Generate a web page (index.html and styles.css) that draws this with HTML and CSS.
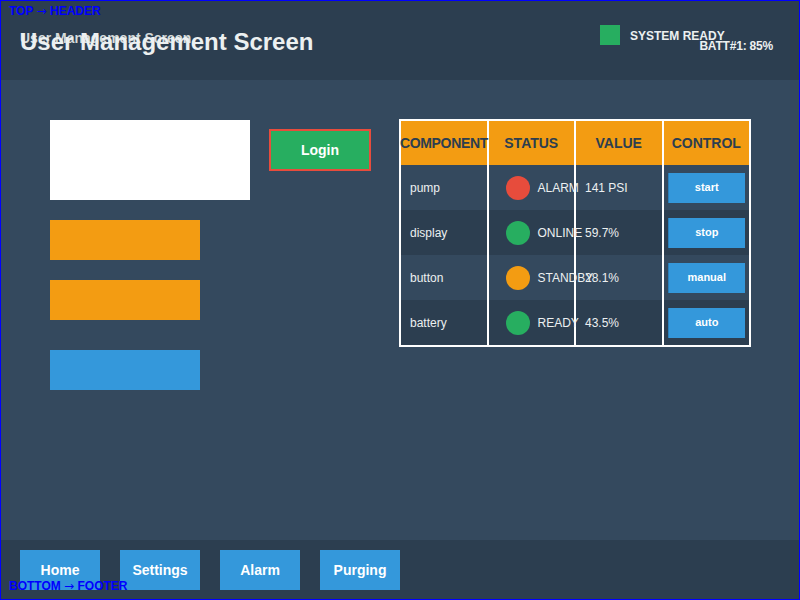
FILE: index.html
```html
<!DOCTYPE html>
<html lang="en">
<head>
<meta charset="utf-8">
<title>User Management Screen</title>
<link rel="stylesheet" href="styles.css">
</head>
<body>
<div class="screen">
  <header class="header">
    <div class="title-block">
      <span class="title-small">User Management Screen</span>
      <h1 class="title">User Management Screen</h1>
    </div>
    <div class="status">
      <div class="status-row">
        <span class="status-square"></span>
        <span class="status-text">SYSTEM READY</span>
      </div>
      <div class="batt">BATT#1: 85%</div>
    </div>
  </header>

  <main class="main">
    <section class="left">
      <div class="form-row">
        <input class="input-box" type="text" aria-label="username">
        <button class="login-btn">Login</button>
      </div>
      <div class="bar bar-orange"></div>
      <div class="bar bar-orange"></div>
      <div class="bar bar-blue"></div>
    </section>

    <table class="grid">
      <thead>
        <tr>
          <th class="th-wide">COMPONENT</th>
          <th>STATUS</th>
          <th>VALUE</th>
          <th>CONTROL</th>
        </tr>
      </thead>
      <tbody>
        <tr class="row-a">
          <td>pump</td>
          <td><div class="st"><span class="dot dot-red"></span><span>ALARM</span></div></td>
          <td>141 PSI</td>
          <td class="ctl"><button class="ctl-btn">start</button></td>
        </tr>
        <tr class="row-b">
          <td>display</td>
          <td><div class="st"><span class="dot dot-green"></span><span>ONLINE</span></div></td>
          <td>59.7%</td>
          <td class="ctl"><button class="ctl-btn">stop</button></td>
        </tr>
        <tr class="row-a">
          <td>button</td>
          <td><div class="st"><span class="dot dot-orange"></span><span>STANDBY</span></div></td>
          <td>28.1%</td>
          <td class="ctl"><button class="ctl-btn">manual</button></td>
        </tr>
        <tr class="row-b">
          <td>battery</td>
          <td><div class="st"><span class="dot dot-green"></span><span>READY</span></div></td>
          <td>43.5%</td>
          <td class="ctl"><button class="ctl-btn">auto</button></td>
        </tr>
      </tbody>
    </table>
  </main>

  <footer class="footer">
    <button class="nav-btn">Home</button>
    <button class="nav-btn">Settings</button>
    <button class="nav-btn">Alarm</button>
    <button class="nav-btn">Purging</button>
  </footer>

  <span class="region-label label-top">TOP <span class="arrow">→</span> HEADER</span>
  <span class="region-label label-bottom">BOTTOM <span class="arrow">→</span> FOOTER</span>
</div>
</body>
</html>
```

FILE: styles.css
```css
* {
  box-sizing: border-box;
}

html, body {
  margin: 0;
  padding: 0;
  background: #34495e;
}

body {
  font-family: "Liberation Sans", Arial, sans-serif;
  color: #ecf0f1;
}

.screen {
  position: relative;
  width: 800px;
  height: 600px;
  overflow: hidden;
  display: flex;
  flex-direction: column;
  background: #34495e;
}

.screen::after {
  content: "";
  position: absolute;
  inset: 0;
  border: 1px solid #0000ff;
  pointer-events: none;
}

/* Header */
.header {
  height: 80px;
  flex: 0 0 80px;
  background: #2c3e50;
  display: flex;
  align-items: flex-start;
  padding: 0 27px 0 20px;
}

.title-block {
  position: relative;
  margin-top: 28px;
}

.title {
  margin: 0;
  font-size: 24px;
  font-weight: bold;
  line-height: normal;
  color: #ecf0f1;
  position: relative;
}

.title-small {
  position: absolute;
  left: 0;
  top: 2px;
  font-size: 14px;
  font-weight: bold;
  white-space: nowrap;
  color: #d5dbdb;
}

.status {
  margin-left: auto;
  margin-top: 25px;
  width: 173px;
  display: flex;
  flex-direction: column;
}

.status-row {
  display: flex;
  align-items: center;
  gap: 10px;
  height: 20px;
}

.status-square {
  width: 20px;
  height: 20px;
  background: #27ae60;
  flex: 0 0 20px;
}

.status-text {
  font-size: 12px;
  font-weight: bold;
  color: #ecf0f1;
  padding-top: 2px;
  white-space: nowrap;
}

.batt {
  margin-top: -6px;
  text-align: right;
  font-size: 12px;
  font-weight: bold;
  letter-spacing: -0.2px;
  color: #ecf0f1;
  white-space: nowrap;
}

/* Main */
.main {
  flex: 1 1 auto;
  display: flex;
  align-items: flex-start;
  padding: 40px 0 0 50px;
}

.left {
  display: flex;
  flex-direction: column;
}

.form-row {
  display: flex;
  align-items: flex-start;
}

.input-box {
  width: 200px;
  height: 80px;
  border: none;
  background: #ffffff;
  margin: 0;
  padding: 0;
}

.login-btn {
  margin: 9px 0 0 19px;
  width: 102px;
  height: 42px;
  border: 2px solid #e74c3c;
  background: #27ae60;
  color: #ffffff;
  font-family: "Liberation Sans", Arial, sans-serif;
  font-size: 14px;
  font-weight: bold;
  padding: 0;
}

.bar {
  width: 150px;
  height: 40px;
  margin-top: 20px;
}

.bar-orange {
  background: #f39c12;
}

.bar-blue {
  background: #3498db;
  margin-top: 30px;
}

/* Table */
.grid {
  margin: -1px 0 0 28px;
  width: 352px;
  table-layout: fixed;
  border-collapse: separate;
  border-spacing: 0;
  border-style: solid;
  border-color: #ffffff;
  border-width: 2px 1px;
  font-size: 12px;
}

.grid th,
.grid td {
  border-left: 1px solid #ffffff;
  border-right: 1px solid #ffffff;
  white-space: nowrap;
  padding: 0 9px;
  overflow: visible;
}

.grid th {
  height: 44px;
  background: #f39c12;
  color: #2c3e50;
  font-size: 14px;
  font-weight: bold;
  text-align: center;
  padding: 0;
}

.grid th.th-wide {
  letter-spacing: -0.35px;
  text-indent: -1px;
}

.grid td {
  height: 45px;
  color: #ecf0f1;
  text-align: left;
  vertical-align: middle;
  padding-top: 1px;
}

.row-a {
  background: #34495e;
}

.row-b {
  background: #2c3e50;
}

.st {
  display: flex;
  align-items: center;
}

.dot {
  flex: 0 0 24px;
  width: 24px;
  height: 24px;
  border-radius: 50%;
  margin: 0 8px 0 8px;
}

.dot-red {
  background: #e74c3c;
}

.dot-green {
  background: #27ae60;
}

.dot-orange {
  background: #f39c12;
}

.grid td.ctl {
  padding: 0 4px;
}

.ctl-btn {
  display: block;
  width: 100%;
  height: 30px;
  margin: 1px 0 0 0;
  border: none;
  border-left: 1px solid #2a7fba;
  background: #3498db;
  color: #ffffff;
  font-family: "Liberation Sans", Arial, sans-serif;
  font-size: 11px;
  font-weight: bold;
  padding: 0 0 2px 0;
}

/* Footer */
.footer {
  height: 60px;
  flex: 0 0 60px;
  background: #2c3e50;
  display: flex;
  align-items: flex-start;
  gap: 20px;
  padding: 10px 20px;
}

.nav-btn {
  width: 80px;
  height: 40px;
  border: none;
  background: #3498db;
  color: #ffffff;
  font-family: "Liberation Sans", Arial, sans-serif;
  font-size: 14px;
  font-weight: bold;
  padding: 0;
}

/* Region labels */
.region-label {
  position: absolute;
  left: 9px;
  font-family: "Liberation Sans", Arial, sans-serif;
  font-size: 12px;
  font-weight: bold;
  color: #0000ff;
  white-space: nowrap;
  line-height: normal;
}

.arrow {
  font-family: "DejaVu Sans", sans-serif;
  font-weight: normal;
  font-size: 12px;
}

.label-top {
  top: 4px;
}

.label-bottom {
  top: 579px;
}
```
